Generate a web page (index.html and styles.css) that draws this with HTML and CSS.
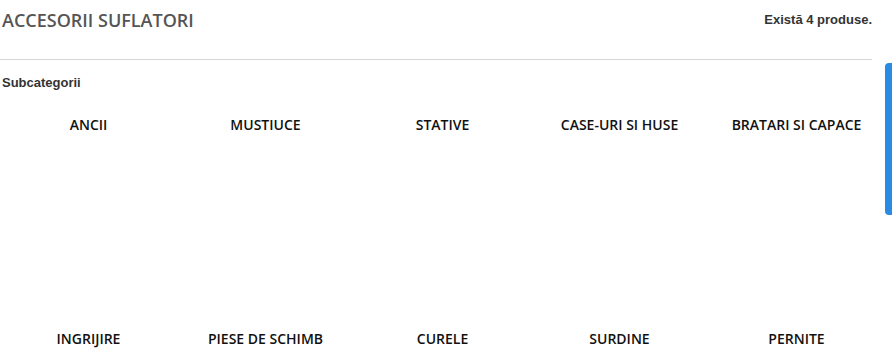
FILE: index.html
```html
<!DOCTYPE html>
<html lang="ro">
<head>
    <meta charset="UTF-8">
    <meta name="viewport" content="width=device-width, initial-scale=1.0">
    <title>Accesorii suflatori</title>
    <link rel="stylesheet" href="styles.css">
</head>
<body>
    <div class="page">
        <div class="category-header">
            <h1>ACCESORII SUFLATORI</h1>
            <span class="product-count">Există 4 produse.</span>
        </div>

        <p class="subcategory-title">Subcategorii</p>

        <ul class="subcategories">
            <li><a href="#">ANCII</a><div class="thumb"></div></li>
            <li><a href="#">MUSTIUCE</a><div class="thumb"></div></li>
            <li><a href="#">STATIVE</a><div class="thumb"></div></li>
            <li><a href="#">CASE-URI SI HUSE</a><div class="thumb"></div></li>
            <li><a href="#">BRATARI SI CAPACE</a><div class="thumb"></div></li>
            <li><a href="#">INGRIJIRE</a><div class="thumb"></div></li>
            <li><a href="#">PIESE DE SCHIMB</a><div class="thumb"></div></li>
            <li><a href="#">CURELE</a><div class="thumb"></div></li>
            <li><a href="#">SURDINE</a><div class="thumb"></div></li>
            <li><a href="#">PERNITE</a><div class="thumb"></div></li>
        </ul>
    </div>

    <div class="side-tab"></div>
</body>
</html>
```

FILE: styles.css
```css
body {
    margin: 0;
    background: #fff;
    font-family: "Liberation Sans", Arial, sans-serif;
    overflow: hidden;
}

.page {
    width: 885px;
}

.category-header {
    width: 872px;
    height: 59px;
    border-bottom: 1px solid #d6d6d6;
    display: flex;
    justify-content: space-between;
    align-items: flex-start;
}

.category-header h1 {
    margin: 9px 0 0 2px;
    font-family: "Open Sans", sans-serif;
    font-weight: 600;
    font-size: 18px;
    line-height: 22px;
    color: #555;
}

.product-count {
    margin-top: 12px;
    font-size: 13px;
    font-weight: bold;
    line-height: 16px;
    color: #333;
}

.subcategory-title {
    margin: 15px 0 0 2px;
    font-size: 13px;
    font-weight: bold;
    line-height: 16px;
    color: #333;
}

.subcategories {
    list-style: none;
    margin: 0;
    padding: 0;
    display: grid;
    grid-template-columns: repeat(5, 1fr);
}

.subcategories li {
    height: 214px;
    text-align: center;
    padding-top: 25px;
    box-sizing: border-box;
}

.subcategories a {
    font-family: "Open Sans", sans-serif;
    font-weight: 600;
    font-size: 14px;
    line-height: 18px;
    color: #111;
    text-decoration: none;
}

.thumb {
    height: 150px;
}

.side-tab {
    position: fixed;
    top: 63px;
    right: 0;
    width: 7px;
    height: 152px;
    background: #2b8be3;
    border-radius: 4px 0 0 4px;
}
```
